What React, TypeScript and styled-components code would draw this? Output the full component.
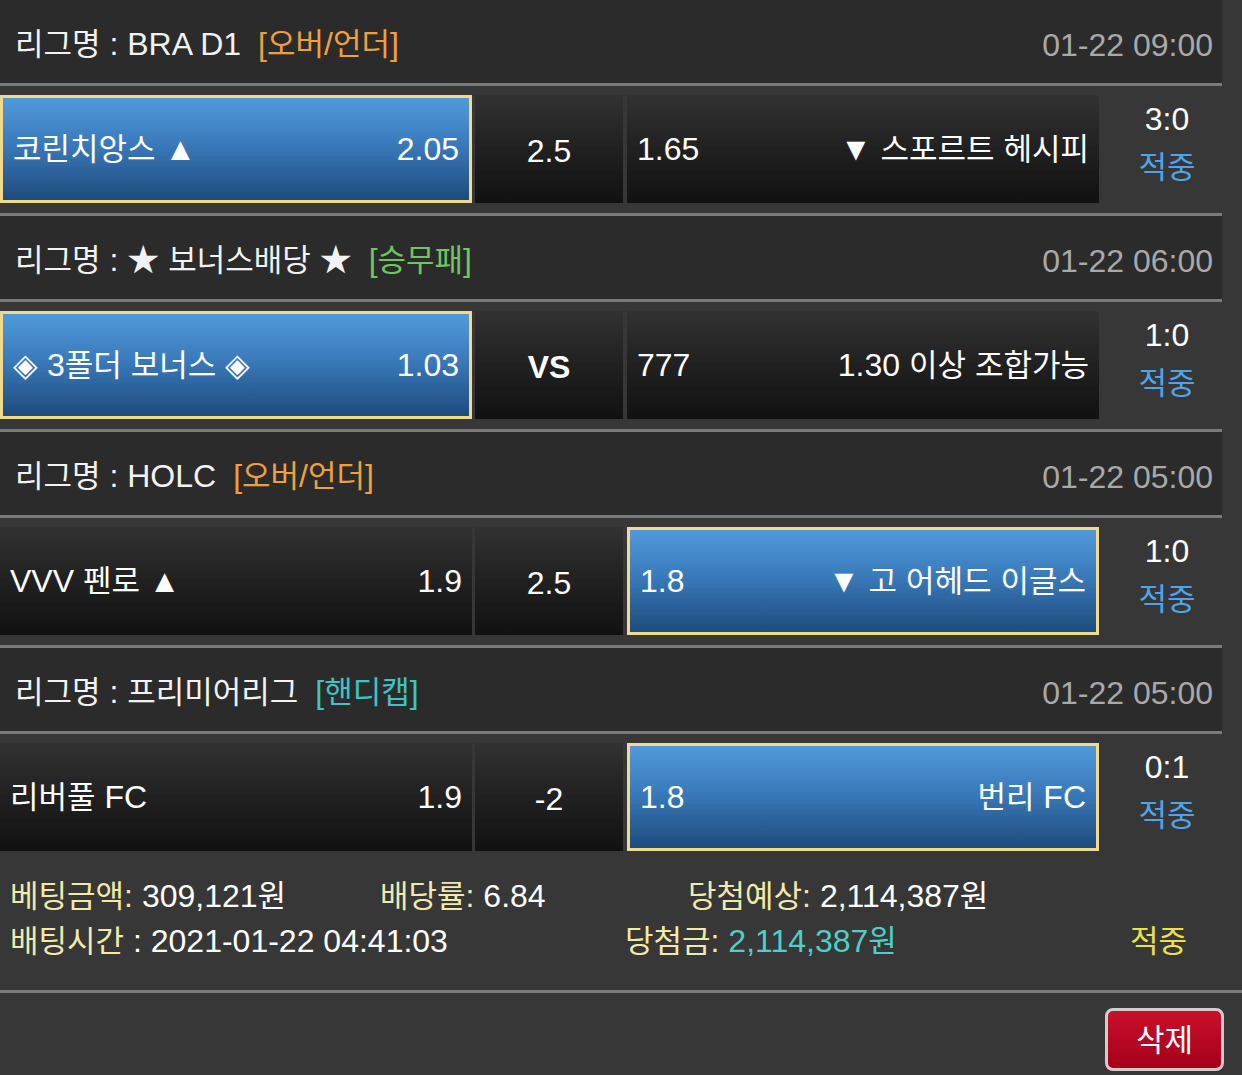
import React from "react";
import styled, { createGlobalStyle, css } from "styled-components";

const Global = createGlobalStyle`
  *, *::before, *::after { box-sizing: border-box; }
  html, body { margin: 0; padding: 0; background: #373737; }
  body {
    font-family: "Liberation Sans", "Noto Sans CJK KR", sans-serif;
    color: #ffffff;
  }
`;

const LINE = "#7a7a7a";

const Page = styled.div`
  width: 1242px;
  min-height: 1075px;
  background: #373737;
  overflow: hidden;
`;

const List = styled.div`
  width: 1222px;
`;

const LeagueHeader = styled.div`
  height: 86px;
  background: #2b2b2b;
  border-bottom: 3px solid ${LINE};
  display: flex;
  align-items: center;
  padding: 6px 9px 0 15px;
  font-size: 32px;
  line-height: 40px;
  color: #f2f2f2;
  white-space: nowrap;
`;

const Tag = styled.span<{ $color: string }>`
  color: ${(p) => p.$color};
  margin-left: 17px;
`;

const Time = styled.span`
  margin-left: auto;
  color: #a9a9a9;
`;

const MatchRow = styled.div<{ $last?: boolean }>`
  height: 130px;
  border-bottom: 3px solid ${LINE};
  display: flex;
  align-items: flex-start;
  padding-top: 9px;
  ${(p) =>
    p.$last &&
    css`
      height: 127px;
      border-bottom: none;
    `}
`;

const Pick = styled.div<{ $sel?: boolean; $gap?: number }>`
  width: 472px;
  height: 108px;
  margin-left: ${(p) => p.$gap ?? 0}px;
  display: flex;
  align-items: center;
  justify-content: space-between;
  padding: 0 10px;
  font-size: 32px;
  line-height: 40px;
  white-space: nowrap;
  background: linear-gradient(#323232 0%, #222222 45%, #111111 100%);
  ${(p) =>
    p.$sel &&
    css`
      border: 3px solid #f3d98c;
      background: linear-gradient(#519ad9 0%, #3a7abb 45%, #1d4b7c 100%);
    `}
`;

const Handicap = styled.div<{ $bold?: boolean }>`
  width: 148px;
  height: 108px;
  margin-left: 3px;
  display: flex;
  align-items: center;
  justify-content: center;
  padding-top: 4px;
  font-size: 32px;
  line-height: 40px;
  font-weight: ${(p) => (p.$bold ? 700 : 400)};
  background: linear-gradient(#323232 0%, #222222 45%, #111111 100%);
`;

const Score = styled.div`
  flex: 1;
  height: 108px;
  display: flex;
  flex-direction: column;
  align-items: center;
  padding: 1px 0 0 13px;
  font-size: 32px;
  line-height: 46px;
`;

const Result = styled.span`
  color: #4ea4e6;
  margin-top: 2px;
`;

const Hangul = styled.span`
  font-size: 31px;
`;

const Summary = styled.div`
  height: 132px;
  padding: 13px 0 0 10px;
  border-bottom: 3px solid ${LINE};
  font-size: 32px;
  line-height: 45px;
  white-space: nowrap;
`;

const SumRow = styled.div<{ $cols: string }>`
  display: grid;
  grid-template-columns: ${(p) => p.$cols};
`;

const Label = styled.span`
  color: #f2eaa8;
`;

const Value = styled.span<{ $color?: string }>`
  color: ${(p) => p.$color ?? "#ffffff"};
`;

const Hit = styled.span`
  color: #ebe24a;
`;

const Footer = styled.div`
  display: flex;
  justify-content: flex-end;
  padding: 15px 18px 0 0;
`;

const DeleteButton = styled.button`
  width: 119px;
  height: 63px;
  border: 3px solid #d4cccc;
  border-radius: 8px;
  background: linear-gradient(#c8102c, #a6001a);
  color: #ffffff;
  font-family: inherit;
  font-size: 32px;
  line-height: 40px;
  padding: 2px 0 0;
  cursor: pointer;
`;

const HANGUL_RUN = /([\uac00-\ud7a3]+)/;

function T({ children }: { children: string }) {
  const parts = children.split(HANGUL_RUN);
  return (
    <>
      {parts.map((p, i) =>
        /[\uac00-\ud7a3]/.test(p) ? <Hangul key={i}>{p}</Hangul> : p
      )}
    </>
  );
}

type Bet = {
  league: string;
  tag: string;
  tagColor: string;
  time: string;
  home: string;
  homeOdds: string;
  mid: string;
  midBold?: boolean;
  awayOdds: string;
  away: string;
  sel: "home" | "away";
  score: string;
};

const bets: Bet[] = [
  {
    league: "리그명 : BRA D1",
    tag: "[오버/언더]",
    tagColor: "#efa03e",
    time: "01-22 09:00",
    home: "코린치앙스 ▲",
    homeOdds: "2.05",
    mid: "2.5",
    awayOdds: "1.65",
    away: "▼ 스포르트 헤시피",
    sel: "home",
    score: "3:0",
  },
  {
    league: "리그명 : ★ 보너스배당 ★",
    tag: "[승무패]",
    tagColor: "#6cc85e",
    time: "01-22 06:00",
    home: "◈ 3폴더 보너스 ◈",
    homeOdds: "1.03",
    mid: "VS",
    midBold: true,
    awayOdds: "777",
    away: "1.30 이상 조합가능",
    sel: "home",
    score: "1:0",
  },
  {
    league: "리그명 : HOLC",
    tag: "[오버/언더]",
    tagColor: "#efa03e",
    time: "01-22 05:00",
    home: "VVV 펜로 ▲",
    homeOdds: "1.9",
    mid: "2.5",
    awayOdds: "1.8",
    away: "▼ 고 어헤드 이글스",
    sel: "away",
    score: "1:0",
  },
  {
    league: "리그명 : 프리미어리그",
    tag: "[핸디캡]",
    tagColor: "#3fc3c3",
    time: "01-22 05:00",
    home: "리버풀 FC",
    homeOdds: "1.9",
    mid: "-2",
    awayOdds: "1.8",
    away: "번리 FC",
    sel: "away",
    score: "0:1",
  },
];

export default function App() {
  return (
    <Page>
      <Global />
      <List>
        {bets.map((b, i) => (
          <React.Fragment key={i}>
            <LeagueHeader>
              <span>
                <T>{b.league}</T>
              </span>
              <Tag $color={b.tagColor}>
                <T>{b.tag}</T>
              </Tag>
              <Time>{b.time}</Time>
            </LeagueHeader>
            <MatchRow $last={i === bets.length - 1}>
              <Pick $sel={b.sel === "home"}>
                <span>
                  <T>{b.home}</T>
                </span>
                <span>{b.homeOdds}</span>
              </Pick>
              <Handicap $bold={b.midBold}>{b.mid}</Handicap>
              <Pick $sel={b.sel === "away"} $gap={4}>
                <span>{b.awayOdds}</span>
                <span>
                  <T>{b.away}</T>
                </span>
              </Pick>
              <Score>
                <span>{b.score}</span>
                <Result>
                  <T>적중</T>
                </Result>
              </Score>
            </MatchRow>
          </React.Fragment>
        ))}
      </List>
      <Summary>
        <SumRow $cols="370px 308px 1fr">
          <span>
            <Label>
              <T>베팅금액:</T>
            </Label>{" "}
            <Value>
              <T>309,121원</T>
            </Value>
          </span>
          <span>
            <Label>
              <T>배당률:</T>
            </Label>{" "}
            <Value>6.84</Value>
          </span>
          <span>
            <Label>
              <T>당첨예상:</T>
            </Label>{" "}
            <Value>
              <T>2,114,387원</T>
            </Value>
          </span>
        </SumRow>
        <SumRow $cols="615px 505px 1fr">
          <span>
            <Label>
              <T>배팅시간</T>
            </Label>
            <Value> : 2021-01-22 04:41:03</Value>
          </span>
          <span>
            <Label>
              <T>당첨금:</T>
            </Label>{" "}
            <Value $color="#4fcfc6">
              <T>2,114,387원</T>
            </Value>
          </span>
          <Hit>
            <T>적중</T>
          </Hit>
        </SumRow>
      </Summary>
      <Footer>
        <DeleteButton>
          <T>삭제</T>
        </DeleteButton>
      </Footer>
    </Page>
  );
}
